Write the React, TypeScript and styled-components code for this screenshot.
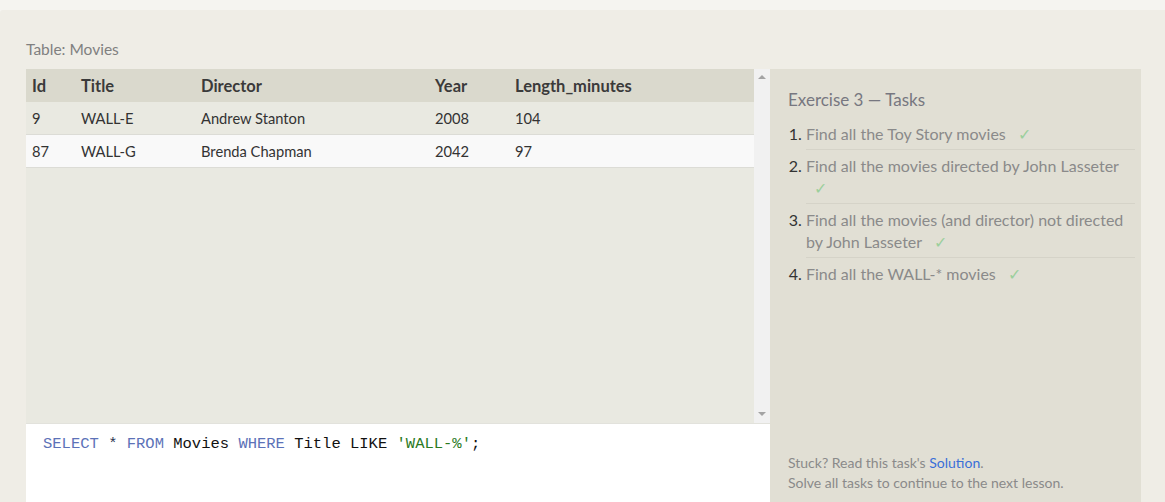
import React from 'react'
import styled, { createGlobalStyle } from 'styled-components'

const GlobalStyle = createGlobalStyle`
  html, body {
    margin: 0;
    padding: 0;
    background: #f5f4f0;
    overflow: hidden;
  }
  body {
    font-family: Lato, 'Open Sans', sans-serif;
  }
`

const movies = [
  { id: 9, title: 'WALL-E', director: 'Andrew Stanton', year: 2008, length: 104 },
  { id: 87, title: 'WALL-G', director: 'Brenda Chapman', year: 2042, length: 97 },
]

const tasks = [
  'Find all the Toy Story movies',
  'Find all the movies directed by John Lasseter',
  'Find all the movies (and director) not directed by John Lasseter',
  'Find all the WALL-* movies',
]

const App = () => {
  return (
    <>
      <GlobalStyle />
      <PageStyled>
        <LessonStyled>
          <CaptionStyled>Table: Movies</CaptionStyled>
          <WorkRow>
            <LeftCol>
              <TableViewport>
                <TableScroll>
                  <TableStyled>
                    <colgroup>
                      <col style={{ width: 49 }} />
                      <col style={{ width: 120 }} />
                      <col style={{ width: 234 }} />
                      <col style={{ width: 80 }} />
                      <col />
                    </colgroup>
                    <thead>
                      <tr>
                        <HeadCell>Id</HeadCell>
                        <HeadCell>Title</HeadCell>
                        <HeadCell>Director</HeadCell>
                        <HeadCell>Year</HeadCell>
                        <HeadCell>Length_minutes</HeadCell>
                      </tr>
                    </thead>
                    <tbody>
                      {movies.map((m, i) => (
                        <BodyRow key={m.id} odd={i % 2 === 1}>
                          <Cell>{m.id}</Cell>
                          <Cell>{m.title}</Cell>
                          <Cell>{m.director}</Cell>
                          <Cell>{m.year}</Cell>
                          <Cell>{m.length}</Cell>
                        </BodyRow>
                      ))}
                    </tbody>
                  </TableStyled>
                </TableScroll>
                <ScrollTrack>
                  <Arrow dir="up" />
                  <Arrow dir="down" />
                </ScrollTrack>
              </TableViewport>
              <EditorStyled>
                <Kw>SELECT</Kw> <Op>*</Op> <Kw>FROM</Kw> Movies <Kw>WHERE</Kw> Title LIKE{' '}
                <Str>'WALL-%'</Str>;
              </EditorStyled>
            </LeftCol>
            <TasksPanel>
              <TasksTitle>Exercise 3 — Tasks</TasksTitle>
              <TaskList>
                {tasks.map((t) => (
                  <TaskItem key={t}>
                    {t} <Check>✓</Check>
                  </TaskItem>
                ))}
              </TaskList>
              <FooterNote>
                <p>
                  Stuck? Read this task's <a href="#">Solution</a>.
                </p>
                <p>Solve all tasks to continue to the next lesson.</p>
              </FooterNote>
            </TasksPanel>
          </WorkRow>
        </LessonStyled>
      </PageStyled>
    </>
  )
}

export default App

const PageStyled = styled.div`
  padding-top: 10px;
  height: 492px;
`

const LessonStyled = styled.div`
  background: #efede6;
  border-top-left-radius: 3px;
  padding: 30px 24px 0 26px;
  height: 100%;
  box-sizing: border-box;
`

const CaptionStyled = styled.div`
  color: #808080;
  font-size: 15.5px;
  line-height: 18px;
  margin-bottom: 11px;
`

const WorkRow = styled.div`
  display: flex;
  align-items: stretch;
`

const LeftCol = styled.div`
  width: 744px;
  display: flex;
  flex-direction: column;
`

const TableViewport = styled.div`
  display: flex;
  height: 354px;
  background: #e9e9e1;
`

const TableScroll = styled.div`
  flex: 1;
`

const TableStyled = styled.table`
  width: 100%;
  border-collapse: collapse;
  table-layout: fixed;
  color: #333;
`

const HeadCell = styled.th`
  background: #dad9cd;
  text-align: left;
  font-weight: 700;
  font-size: 16.5px;
  height: 33px;
  padding: 0 6px;
  color: #3a3a3a;
`

const BodyRow = styled.tr<{ odd?: boolean }>`
  background: ${({ odd }) => (odd ? '#f9f9f9' : '#e9e9e1')};
  border-bottom: 1px solid #dcdcd6;
`

const Cell = styled.td`
  font-size: 14.7px;
  height: 32px;
  padding: 0 6px;
`

const ScrollTrack = styled.div`
  width: 16px;
  background: #f1f1f1;
  display: flex;
  flex-direction: column;
  justify-content: space-between;
  align-items: center;
  padding: 6px 0 7px;
`

const Arrow = styled.div<{ dir: 'up' | 'down' }>`
  width: 0;
  height: 0;
  border-left: 4px solid transparent;
  border-right: 4px solid transparent;
  ${({ dir }) =>
    dir === 'up'
      ? 'border-bottom: 4px solid #a3a3a3;'
      : 'border-top: 4px solid #a3a3a3;'}
`

const EditorStyled = styled.div`
  background: #fff;
  border-top: 1px solid #e2e2dc;
  height: 110px;
  padding: 10px 17px;
  box-sizing: border-box;
  font-family: 'Liberation Mono', 'DejaVu Sans Mono', monospace;
  font-size: 15.5px;
  line-height: 20px;
  color: #111;
  white-space: pre;
`

const Kw = styled.span`
  color: #5c72b8;
`

const Op = styled.span`
  color: #2a3450;
`

const Str = styled.span`
  color: #2b7a1e;
`

const TasksPanel = styled.div`
  width: 371px;
  background: #e1dfd4;
  padding: 20px 6px 40px 18px;
  box-sizing: border-box;
  display: flex;
  flex-direction: column;
`

const TasksTitle = styled.h3`
  margin: 0 0 7px;
  font-weight: 400;
  font-size: 17px;
  line-height: 22px;
  color: #777780;
`

const TaskList = styled.ol`
  margin: 0;
  padding-left: 18px;
`

const TaskItem = styled.li`
  font-size: 16px;
  line-height: 22px;
  color: #8a8a8a;
  padding: 5px 0 4px;
  & + & {
    border-top: 1px solid #d5d3c8;
  }
  &::marker {
    color: #333;
  }
`

const Check = styled.span`
  color: #9ccf9c;
  margin-left: 8px;
`

const FooterNote = styled.div`
  margin-top: auto;
  font-size: 14px;
  line-height: 20px;
  color: #8a8a8a;
  p {
    margin: 0;
  }
  a {
    color: #3a6fd8;
    text-decoration: none;
  }
`
